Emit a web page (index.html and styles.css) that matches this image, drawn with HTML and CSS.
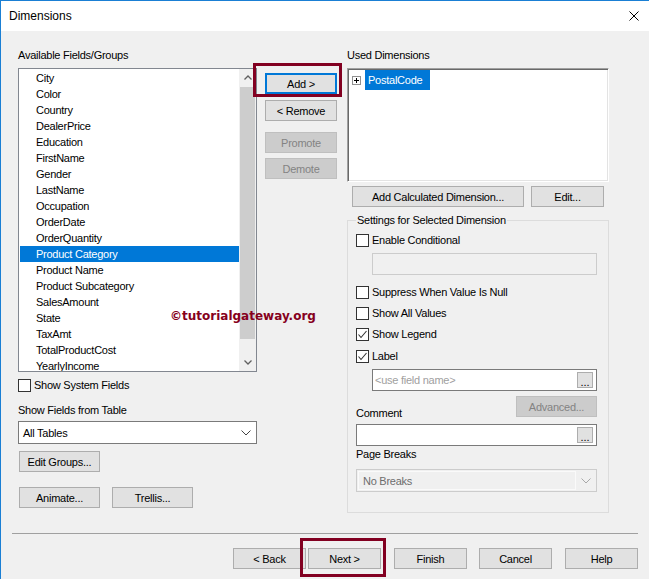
FILE: index.html
```html
<!DOCTYPE html>
<html>
<head>
<meta charset="utf-8">
<title>Dimensions</title>
<link rel="stylesheet" href="styles.css">
</head>
<body>
<div class="window">
  <div class="titlebar">
    <span class="title">Dimensions</span>
    <svg class="close" viewBox="0 0 10 10" width="10" height="10"><path d="M0.5 0.5 L9.5 9.5 M9.5 0.5 L0.5 9.5" stroke="#000" stroke-width="1" fill="none"/></svg>
  </div>
  <div class="body">
    <div class="top">
      <div class="col-left">
        <div class="lbl">Available Fields/Groups</div>
        <div class="listbox">
          <div class="items">
            <div class="item">City</div>
            <div class="item">Color</div>
            <div class="item">Country</div>
            <div class="item">DealerPrice</div>
            <div class="item">Education</div>
            <div class="item">FirstName</div>
            <div class="item">Gender</div>
            <div class="item">LastName</div>
            <div class="item">Occupation</div>
            <div class="item">OrderDate</div>
            <div class="item">OrderQuantity</div>
            <div class="item sel">Product Category</div>
            <div class="item">Product Name</div>
            <div class="item">Product Subcategory</div>
            <div class="item">SalesAmount</div>
            <div class="item">State</div>
            <div class="item">TaxAmt</div>
            <div class="item">TotalProductCost</div>
            <div class="item">YearlyIncome</div>
          </div>
          <div class="vscroll">
            <div class="sarrow"><svg width="8" height="5" viewBox="0 0 8 5"><polyline points="0.5,4.5 4,1 7.5,4.5" fill="none" stroke="#606060" stroke-width="1.3"/></svg></div>
            <div class="thumb"></div>
            <div class="strack"></div>
            <div class="sarrow"><svg width="8" height="5" viewBox="0 0 8 5"><polyline points="0.5,0.5 4,4 7.5,0.5" fill="none" stroke="#606060" stroke-width="1.3"/></svg></div>
          </div>
        </div>
        <div class="check cb-sys"><span class="cb"></span>Show System Fields</div>
        <div class="lbl lbl-table">Show Fields from Table</div>
        <div class="select">
          <span>All Tables</span>
          <svg width="10" height="6" viewBox="0 0 10 6"><polyline points="0.5,0.5 5,5 9.5,0.5" fill="none" stroke="#444" stroke-width="1"/></svg>
        </div>
        <div class="row-editgroups"><button class="btn w81">Edit Groups...</button></div>
        <div class="row-anim">
          <button class="btn w81">Animate...</button>
          <button class="btn w81">Trellis...</button>
        </div>
      </div>

      <div class="col-mid">
        <div class="add-wrap">
          <button class="btn focus">Add &gt;</button>
          <div class="hl hl-add"></div>
        </div>
        <button class="btn mid-remove">&lt; Remove</button>
        <button class="btn disabled mid-promote">Promote</button>
        <button class="btn disabled mid-demote">Demote</button>
      </div>

      <div class="col-right">
        <div class="lbl">Used Dimensions</div>
        <div class="tree">
          <div class="tree-row">
            <span class="plus"><svg width="7" height="7" viewBox="0 0 7 7"><path d="M1 3.5 H6 M3.5 1 V6" stroke="#000" stroke-width="1"/></svg></span>
            <span class="tree-sel">PostalCode</span>
          </div>
        </div>
        <div class="row-calc">
          <button class="btn w172">Add Calculated Dimension...</button>
          <button class="btn w73 edit-btn">Edit...</button>
        </div>
        <div class="group">
          <span class="legend">Settings for Selected Dimension</span>
          <div class="check"><span class="cb"></span>Enable Conditional</div>
          <div class="input disabled-input indent"></div>
          <div class="check g-suppress"><span class="cb"></span>Suppress When Value Is Null</div>
          <div class="check g-gap7"><span class="cb"></span>Show All Values</div>
          <div class="check g-gap7"><span class="cb"><svg width="11" height="11" viewBox="0 0 11 11"><polyline points="1.5,5.5 4,8.5 9.5,2" fill="none" stroke="#333" stroke-width="1.1"/></svg></span>Show Legend</div>
          <div class="check g-gap8"><span class="cb"><svg width="11" height="11" viewBox="0 0 11 11"><polyline points="1.5,5.5 4,8.5 9.5,2" fill="none" stroke="#333" stroke-width="1.1"/></svg></span>Label</div>
          <div class="input indent field-name">
            <span class="placeholder">&lt;use field name&gt;</span>
            <button class="dots">...</button>
          </div>
          <div class="adv-row">
            <span class="lbl comment-lbl">Comment</span>
            <button class="btn disabled w81">Advanced...</button>
          </div>
          <div class="input comment-input">
            <span></span>
            <button class="dots">...</button>
          </div>
          <div class="lbl pb-lbl">Page Breaks</div>
          <div class="select disabled-select">
            <span class="sf">No Breaks</span>
            <span class="sarrow2"><svg width="10" height="6" viewBox="0 0 10 6"><polyline points="0.5,0.5 5,5 9.5,0.5" fill="none" stroke="#a8a8a8" stroke-width="1"/></svg></span>
          </div>
        </div>
      </div>
    </div>

    <div class="sep"></div>

    <div class="footer">
      <button class="btn w73 f-back">&lt; Back</button>
      <div class="next-wrap">
        <button class="btn w73">Next &gt;</button>
        <div class="hl hl-next"></div>
      </div>
      <button class="btn w73 f-finish">Finish</button>
      <button class="btn w73 f-cancel">Cancel</button>
      <button class="btn w73">Help</button>
    </div>
  </div>
  <div class="watermark">©tutorialgateway.org</div>
</div>
</body>
</html>
```

FILE: styles.css
```css
* { box-sizing: border-box; }
html, body { margin: 0; padding: 0; }
body {
  background: #f0f0f0;
  font-family: "Liberation Sans", Arial, sans-serif;
  font-size: 11px;
  letter-spacing: -0.25px;
  color: #000;
}
.window {
  position: relative;
  width: 649px;
  height: 579px;
  border-top: 1px solid #1a7fd4;
  border-left: 1px solid #1a7fd4;
  background: #f0f0f0;
  overflow: hidden;
}
.titlebar {
  height: 30px;
  background: #fff;
  display: flex;
  align-items: center;
  justify-content: space-between;
  padding: 0 10px 0 8px;
}
.title { font-size: 12px; letter-spacing: 0; }
.close { display: block; }

.body { padding-top: 17px; }
.top { display: flex; padding-left: 17px; align-items: flex-start; }

.lbl { height: 15px; line-height: 15px; white-space: nowrap; }

/* left column */
.col-left { width: 239px; display: flex; flex-direction: column; }
.listbox {
  margin-top: 5px;
  height: 304px;
  border: 1px solid #828790;
  background: #fff;
  display: flex;
}
.items { flex: 1; padding: 1px 0 0 1px; overflow: hidden; }
.item { height: 16px; line-height: 16px; padding-left: 16px; white-space: nowrap; }
.item.sel { background: #0078d7; color: #fff; }
.vscroll { width: 17px; background: #f0f0f0; display: flex; flex-direction: column; }
.sarrow { height: 17px; display: flex; align-items: center; justify-content: center; }
.thumb { margin: 1px 1px 0; height: 252px; background: #cdcdcd; }
.strack { flex: 1; }

.check { display: flex; align-items: center; height: 14px; white-space: nowrap; }
.cb {
  width: 13px; height: 13px;
  border: 1px solid #333;
  background: #fff;
  margin-right: 3px;
  flex: none;
  display: flex; align-items: center; justify-content: center;
}
.cb-sys { margin-top: 6px; }
.lbl-table { margin-top: 11px; }

.select {
  margin-top: 3px;
  height: 23px;
  border: 1px solid #7a7a7a;
  background: #fff;
  display: flex;
  align-items: center;
  justify-content: space-between;
  padding: 0 5px 0 4px;
}
.row-editgroups { margin-top: 7px; padding-left: 1px; display: flex; }
.row-anim { margin-top: 15px; padding-left: 1px; display: flex; gap: 12px; }

.btn {
  height: 21px;
  border: 1px solid #adadad;
  background: #e1e1e1;
  font-family: inherit;
  font-size: 11px;
  letter-spacing: -0.25px;
  color: #000;
  padding: 0;
  margin: 0;
  white-space: nowrap;
  width: 72px;
}
.btn.w81 { width: 81px; }
.btn.w73 { width: 73px; }
.btn.w172 { width: 172px; }
.btn.focus { border: 2px solid #0078d7; }
.btn.disabled { background: #cccccc; border-color: #bfbfbf; color: #838383; }

/* middle column */
.col-mid { margin-left: 8px; width: 72px; display: flex; flex-direction: column; }
.add-wrap { position: relative; margin-top: 25px; height: 21px; }
.mid-remove { margin-top: 6px; }
.mid-promote { margin-top: 11px; }
.mid-demote { margin-top: 5px; }
.hl { position: absolute; border: 3px solid #820021; pointer-events: none; }
.hl-add { left: -12px; top: -10px; width: 89px; height: 34px; }

/* right column */
.col-right { margin-left: 10px; width: 262px; display: flex; flex-direction: column; }
.tree {
  margin-top: 5px;
  height: 114px;
  background: #fff;
  border: 1px solid;
  border-color: #a0a0a0 #ffffff #ffffff #a0a0a0;
  box-shadow: inset 1px 1px 0 #696969, inset -1px -1px 0 #e3e3e3;
  padding-top: 1px;
}
.tree-row { display: flex; align-items: center; height: 20px; }
.plus {
  margin-left: 4px;
  width: 9px; height: 9px;
  border: 1px solid #919191;
  background: #fff;
  display: flex; align-items: center; justify-content: center;
}
.tree-sel {
  margin-left: 4px;
  height: 20px;
  line-height: 20px;
  padding: 0 8px 0 3px;
  background: #0078d7;
  color: #fff;
}
.row-calc { margin-top: 4px; display: flex; padding-left: 5px; }
.edit-btn { margin-left: 7px; }

.group {
  position: relative;
  margin-top: 13px;
  height: 293px;
  border: 1px solid #dcdcdc;
  padding: 12px 11px 0 8px;
  display: flex;
  flex-direction: column;
}
.legend {
  position: absolute;
  top: -8px;
  left: 8px;
  padding: 0 1px;
  background: #f0f0f0;
  line-height: 15px;
  white-space: nowrap;
}
.input {
  height: 22px;
  border: 1px solid #7a7a7a;
  background: #fff;
  display: flex;
  align-items: center;
  justify-content: space-between;
  padding: 0 3px 0 2px;
}
.indent { margin-left: 16px; }
.disabled-input { margin-top: 6px; background: #f0f0f0; border-color: #cccccc; }
.g-suppress { margin-top: 10px; }
.g-gap7 { margin-top: 7px; }
.g-gap8 { margin-top: 8px; }
.field-name { margin-top: 6px; }
.placeholder { color: #a0a0a0; }
.dots {
  width: 16px; height: 16px;
  border: 1px solid #adadad;
  background: #e1e1e1;
  font-family: inherit;
  font-size: 11px;
  letter-spacing: 0;
  line-height: 18px;
  padding: 0;
  color: #000;
}
.adv-row {
  margin-top: 5px;
  height: 24px;
  display: flex;
  justify-content: space-between;
  align-items: flex-start;
}
.comment-lbl { align-self: flex-end; height: 14px; line-height: 14px; }
.comment-input { margin-top: 4px; }
.pb-lbl { margin-top: 1px; }
.disabled-select {
  margin-top: 7px;
  border-color: #cccccc;
  background: #f0f0f0;
  padding: 1px;
  align-items: stretch;
}
.sf {
  flex: 1;
  border: 1px solid #fafafa;
  padding-left: 4px;
  color: #6d6d6d;
  display: flex;
  align-items: center;
}
.sarrow2 { width: 19px; display: flex; align-items: center; justify-content: center; }

/* bottom */
.sep { margin: 20px 0 0 11px; width: 626px; height: 1px; background: #a0a0a0; }
.footer { margin-top: 14px; display: flex; justify-content: flex-end; padding-right: 11px; }
.f-back { margin-right: 2px; }
.next-wrap { position: relative; margin-right: 13px; }
.next-wrap .btn { display: block; }
.hl-next { left: -8px; top: -10px; width: 86px; height: 39px; }
.f-finish { margin-right: 12px; }
.f-cancel { margin-right: 13px; }

.watermark {
  position: absolute;
  left: 169px;
  top: 307px;
  line-height: 16px;
  font-family: "DejaVu Sans", Verdana, sans-serif;
  font-weight: bold;
  font-size: 12px;
  letter-spacing: 0;
  color: #86001c;
  white-space: nowrap;
}
```
